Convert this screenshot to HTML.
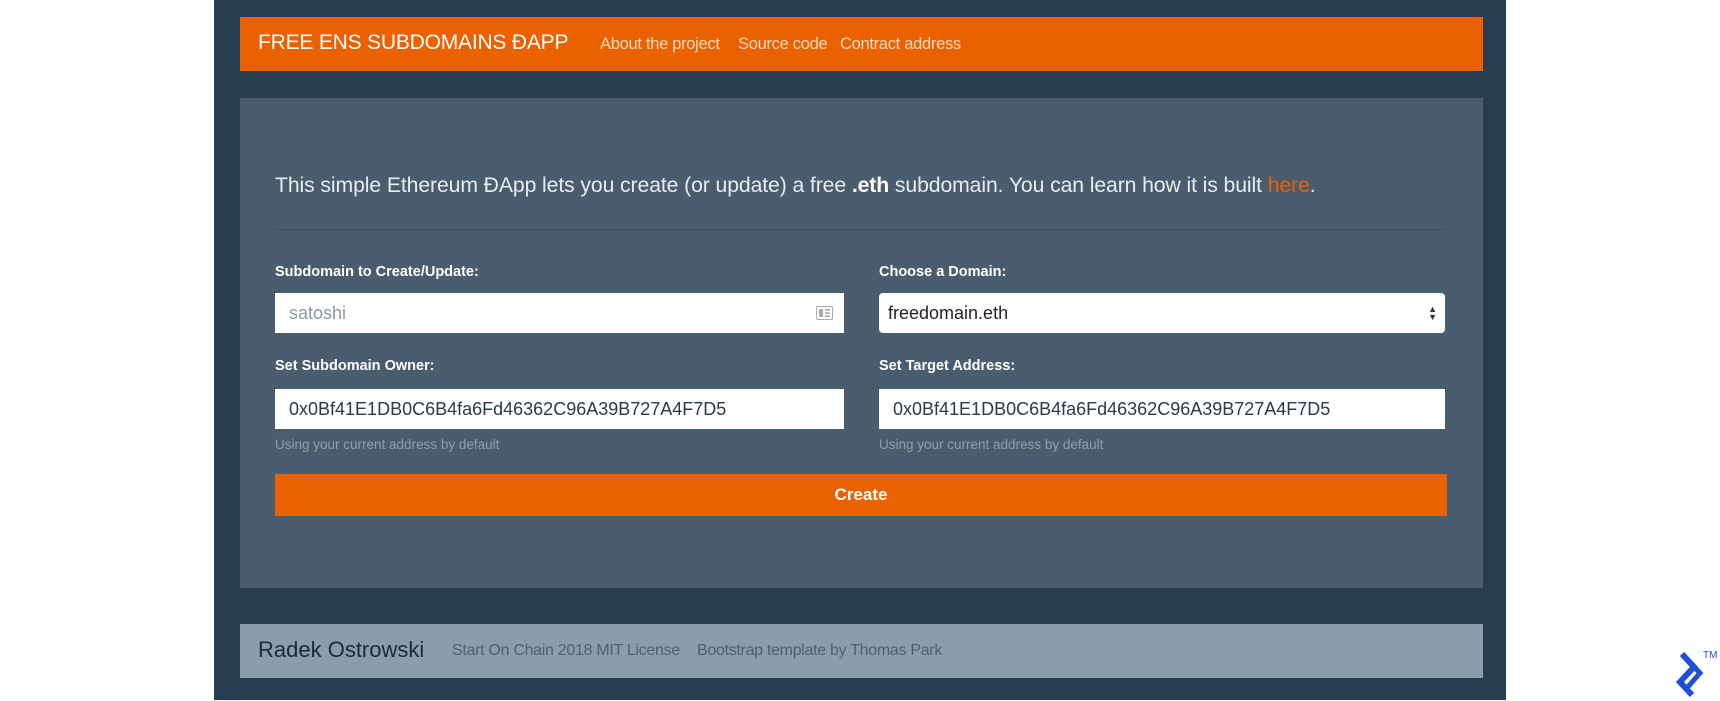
<!DOCTYPE html>
<html><head><meta charset="utf-8"><style>
*{margin:0;padding:0;box-sizing:border-box}
body{width:1720px;height:701px;background:#fff;position:relative;overflow:hidden;font-family:"Liberation Sans",sans-serif}
.wrap{position:absolute;left:214px;top:0;width:1292px;height:700px;background:#283d52}
.abs{position:absolute;white-space:nowrap}
.nav{position:absolute;left:240px;top:17px;width:1243px;height:54px;background:#eb6100}
.panel{position:absolute;left:240px;top:98px;width:1243px;height:490px;background:#4a5d6e}
.foot{position:absolute;left:240px;top:624px;width:1243px;height:54px;background:#8a9dad}
.inp{position:absolute;height:40px;background:#fff;color:#2b3a48;font-size:18px;line-height:40px;padding-left:14px}
.lbl{position:absolute;color:#fff;font-weight:bold;font-size:14.5px}
.help{position:absolute;color:#8f9eab;font-size:13.5px}
</style></head><body>
<div class="wrap"></div>
<div class="nav"></div>
<div class="abs" style="left:258px;top:31px;color:#fff;font-size:21px;letter-spacing:-0.2px">FREE ENS SUBDOMAINS ĐAPP</div>
<div class="abs" style="left:600px;top:35px;color:#fbd8c0;font-size:16.5px;letter-spacing:-0.3px">About the project</div>
<div class="abs" style="left:738px;top:35px;color:#fbd8c0;font-size:16.5px;letter-spacing:-0.3px">Source code</div>
<div class="abs" style="left:840px;top:35px;color:#fbd8c0;font-size:16.5px;letter-spacing:-0.3px">Contract address</div>
<div class="panel"></div>
<div class="abs" style="left:275px;top:174px;color:#e8ecef;font-size:21.2px;letter-spacing:-0.1px">This simple Ethereum ĐApp lets you create (or update) a free <b style="color:#fff">.eth</b> subdomain. You can learn how it is built <span style="color:#eb6100">here</span>.</div>
<div class="abs" style="left:275px;top:229px;width:1171px;height:1px;background:#3f5161"></div>
<div class="lbl abs" style="left:275px;top:264px">Subdomain to Create/Update:</div>
<div class="lbl abs" style="left:879px;top:264px">Choose a Domain:</div>
<div class="inp" style="left:275px;top:293px;width:569px;color:#8e99a3">satoshi
<svg style="position:absolute;right:11px;top:13px" width="17" height="14" viewBox="0 0 17 14"><rect x="0.5" y="0.5" width="16" height="13" rx="1.5" fill="none" stroke="#aaa"/><rect x="3" y="3" width="4" height="8" fill="#aaa"/><rect x="9" y="3" width="5" height="1.6" fill="#aaa"/><rect x="9" y="6.2" width="5" height="1.6" fill="#aaa"/><rect x="9" y="9.4" width="5" height="1.6" fill="#aaa"/></svg></div>
<div class="inp" style="left:879px;top:293px;width:566px;border-radius:4px;color:#222;padding-left:9px">freedomain.eth
<span style="position:absolute;right:8px;top:0;font-size:9px;line-height:8px;padding-top:12px;color:#333">▲<br>▼</span></div>
<div class="lbl abs" style="left:275px;top:358px">Set Subdomain Owner:</div>
<div class="lbl abs" style="left:879px;top:358px">Set Target Address:</div>
<div class="inp" style="left:275px;top:389px;width:569px">0x0Bf41E1DB0C6B4fa6Fd46362C96A39B727A4F7D5</div>
<div class="inp" style="left:879px;top:389px;width:566px">0x0Bf41E1DB0C6B4fa6Fd46362C96A39B727A4F7D5</div>
<div class="help abs" style="left:275px;top:437px">Using your current address by default</div>
<div class="help abs" style="left:879px;top:437px">Using your current address by default</div>
<div class="abs" style="left:275px;top:474px;width:1172px;height:42px;background:#eb6100;color:#fff;font-size:17px;font-weight:bold;text-align:center;line-height:42px">Create</div>
<div class="foot"></div>
<div class="abs" style="left:258px;top:637px;color:#1e2a36;font-size:22px">Radek Ostrowski</div>
<div class="abs" style="left:452px;top:642px;color:#4f6070;font-size:16px;letter-spacing:-0.3px">Start On Chain 2018 MIT License</div>
<div class="abs" style="left:697px;top:642px;color:#4f6070;font-size:16px;letter-spacing:-0.3px">Bootstrap template by Thomas Park</div>
<svg class="abs" style="left:1670px;top:650px" width="36" height="50" viewBox="0 0 36 50"><path d="M12 4 L24 17 L10 32 L22 45" fill="none" stroke="#1e4fd6" stroke-width="6" stroke-linejoin="miter"/><path d="M24 17 L30 23 L17 38" fill="none" stroke="#1e4fd6" stroke-width="5"/></svg>
<div class="abs" style="left:1703px;top:650px;color:#1e4fd6;font-size:10px">TM</div>
</body></html>
